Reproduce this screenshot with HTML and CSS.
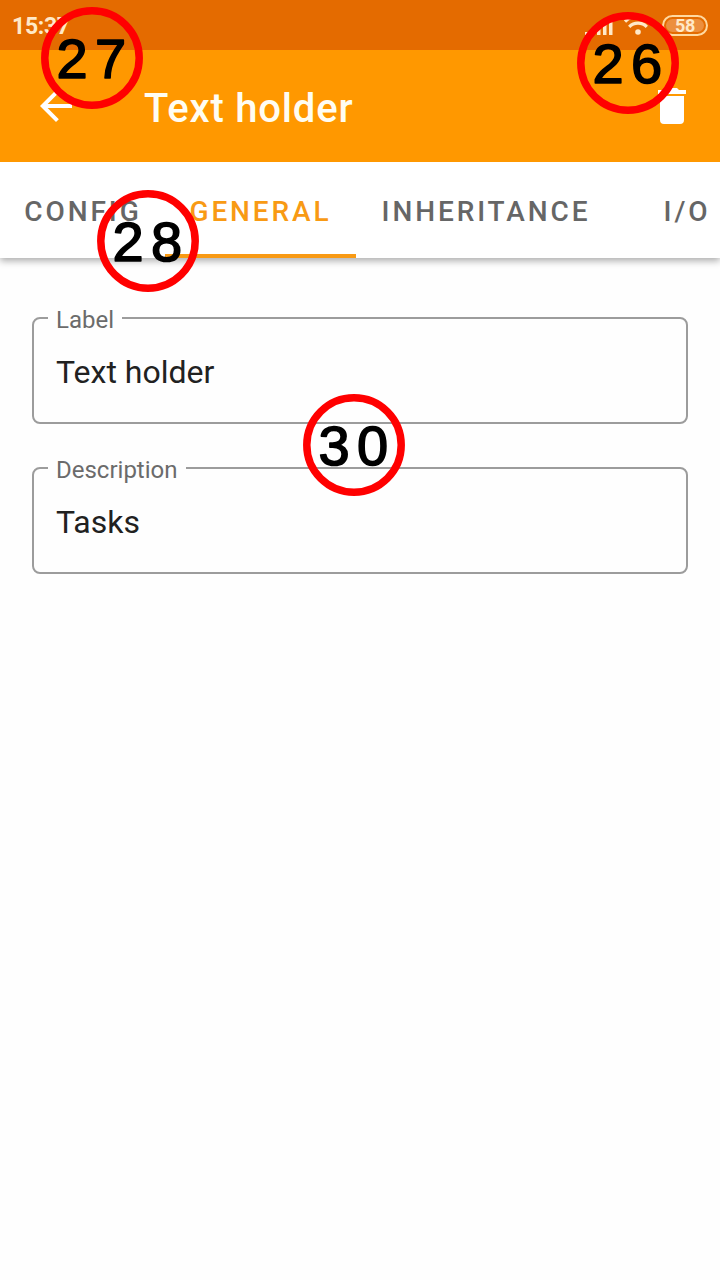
FILE: index.html
```html
<!DOCTYPE html>
<html lang="en">
<head>
<meta charset="utf-8">
<title>Text holder</title>
<link rel="stylesheet" href="styles.css">
</head>
<body>
<div class="screen">
  <header class="top">
    <div class="status">
      <span class="clock">15:37</span>
      <svg class="signal" width="28" height="20" viewBox="0 0 28 20"><path d="M0 17h3.500v3H0zM6 13.500h3.500V20H6zM12 9.500h3.500V20H12zM18 5.500h3.500V20H18zM24 1h3.500v19H24z"/></svg>
      <svg class="wifi" width="28" height="20" viewBox="0 0 28 20"><path class="arc" d="M1 6.500a18.500 18.500 0 0 1 26 0M5.200 11.800a12.300 12.300 0 0 1 17.600 0"/><circle cx="14" cy="17" r="2.800"/></svg>
      <span class="battery"><span>58</span></span>
    </div>
    <div class="bar">
      <svg class="back" width="32" height="32" viewBox="0 0 32 32"><path d="M32 14H7.660L18.840 2.820 16 0 0 16l16 16 2.820-2.820L7.660 18H32z"/></svg>
      <h1>Text holder</h1>
      <svg class="trash" width="28" height="36" viewBox="0 0 28 36"><path d="M2 32a4 4 0 0 0 4 4h16a4 4 0 0 0 4-4V8H2zM28 2h-7l-2-2H9L7 2H0v4h28z"/></svg>
    </div>
  </header>
  <nav class="tabs">
    <a class="tab config">CONFIG</a>
    <a class="tab general active">GENERAL</a>
    <a class="tab inheritance">INHERITANCE</a>
    <a class="tab io">I/O</a>
  </nav>
  <main class="form">
    <div class="field"><label>Label</label><span>Text holder</span></div>
    <div class="field"><label>Description</label><span>Tasks</span></div>
  </main>
  <svg class="marks" width="720" height="520" viewBox="0 0 720 520">
    <g transform="translate(92 58)"><circle r="47.200"/><text x="-20 18.500" y="19.500">27</text></g>
    <g transform="translate(628 63)"><circle r="47.200"/><text x="-20 18.500" y="19.500">26</text></g>
    <g transform="translate(148 241)"><circle r="47.200"/><text x="-20 18.500" y="19.500">28</text></g>
    <g transform="translate(354 445)"><circle r="47.200"/><text x="-20 18.500" y="19.500">30</text></g>
  </svg>
</div>
</body>
</html>
```
FILE: styles.css
```css
body { margin: 0; background: #fff; font-family: Roboto, sans-serif; }
.screen { position: relative; width: 720px; height: 1280px; overflow: hidden; background: #fefefe; }
.top { position: relative; z-index: 1; height: 162px; background: #ff9800; color: #fffdf2; }
.status { height: 50px; box-sizing: border-box; padding: 0 12px 0 12px; display: flex; align-items: center; background: #e46b00; color: #ffe9c8; }
.clock { flex: 1; font-size: 23px; font-weight: 700; line-height: 50px; padding-top: 3px; letter-spacing: -0.3px; }
.signal, .wifi { fill: #ffe9c8; }
.signal { margin: 0 11px 0 0; }
.wifi { margin-right: 10px; }
.arc { fill: none; stroke: #ffe9c8; stroke-width: 3.200; }
.battery { box-sizing: border-box; width: 46px; height: 21px; border: 2px solid #ffd9a0; border-radius: 11px; padding: 2px; display: flex; }
.battery span { flex: 1; border-radius: 7px; background: #ec8f3e; font-size: 18px; font-weight: 700; line-height: 14px; text-align: center; letter-spacing: -0.4px; }
.bar { height: 112px; box-sizing: border-box; padding: 0 34px 0 40px; display: flex; align-items: center; }
.back, .trash { fill: #fff; }
.bar h1 { margin: 5px 0 0 72px; flex: 1; font-size: 40px; font-weight: 500; line-height: 49px; letter-spacing: 0.8px; }
.tabs { height: 96px; display: flex; background: #fff; box-shadow: 0 3px 7px rgba(0,0,0,.32); }
.tab { flex: none; box-sizing: border-box; text-align: center; color: #666; font-size: 28px; font-weight: 500; line-height: 100px; letter-spacing: 2.9px; height: 96px; }
.config { width: 166px; margin-right: -1px; }
.general { width: 191px; }
.inheritance { width: 260px; }
.io { width: 142px; }
.active { color: #f89a14; border-bottom: 4px solid #f89a14; }
.form { padding: 59px 32px 0; display: flex; flex-direction: column; gap: 43px; }
.field { position: relative; box-sizing: border-box; height: 107px; border: 2px solid #9c9c9c; border-radius: 8px; padding: 0 22px; }
.field label { position: absolute; left: 14px; top: -13px; padding: 0 8px; background: #fefefe; color: #6b6b6b; font-size: 24px; line-height: 28px; }
.field span { display: block; color: #212121; font-size: 32px; line-height: 106px; }
.marks { position: absolute; z-index: 2; left: 0; top: 0; }
.marks circle { fill: none; stroke: #f00; stroke-width: 7.5; }
.marks text { font-family: "Liberation Sans", sans-serif; font-size: 56px; text-anchor: middle; fill: #000; stroke: #000; stroke-width: 1.6; stroke-linejoin: round; }
```
